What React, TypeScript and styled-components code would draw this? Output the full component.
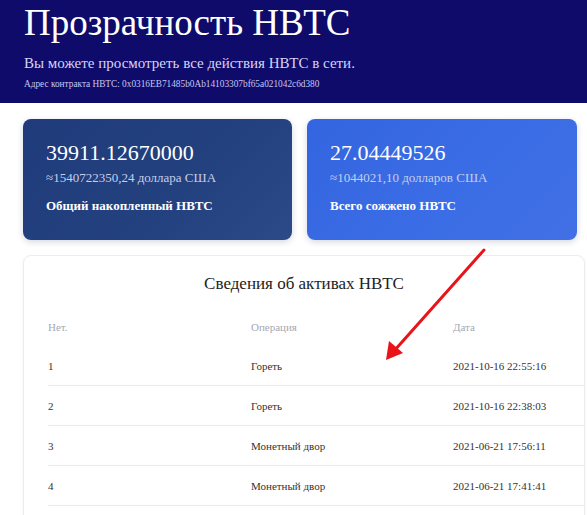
import styled, { createGlobalStyle } from "styled-components";

// ----------------------------------------------
//  global
// ----------------------------------------------
const GlobalStyle = createGlobalStyle`
  html, body {
    margin: 0;
    padding: 0;
    background: #ffffff;
  }
  body {
    font-family: "Liberation Serif", "Times New Roman", serif;
    overflow: hidden;
  }
`;

// ----------------------------------------------
//  styled components
// ----------------------------------------------
const Page = styled.div`
  position: relative;
  width: 587px;
  min-height: 515px;
`;

const Header = styled.header`
  background: #0f0b6a;
  padding: 1px 24px 12px;
  color: #ffffff;
`;

const Title = styled.h1`
  margin: 0;
  font-size: 37px;
  line-height: 44px;
  font-weight: 400;
`;

const Subtitle = styled.p`
  margin: 8px 0 0;
  font-size: 15px;
  line-height: 20px;
  color: #d6d4f4;
`;

const Address = styled.p`
  margin: 4px 0 0;
  font-size: 9.3px;
  line-height: 14px;
  color: #c9c7ee;
`;

const Cards = styled.section`
  display: grid;
  grid-template-columns: 269px 270px;
  gap: 15px;
  padding: 16px 0 0 23px;
`;

const Card = styled.div<{ $tone: "dark" | "light" }>`
  height: 121px;
  box-sizing: border-box;
  padding: 19px 22px 0 23px;
  border-radius: 8px;
  color: #ffffff;
  background: ${(p) =>
    p.$tone === "dark"
      ? "linear-gradient(135deg, #1f3b7b 0%, #24417f 60%, #2c4a88 100%)"
      : "linear-gradient(135deg, #3465e0 0%, #3b6de6 60%, #426fe4 100%)"};
  box-shadow: 0 2px 6px rgba(20, 40, 90, 0.18);
`;

const Value = styled.div`
  font-size: 22px;
  line-height: 30px;
`;

const Approx = styled.div`
  margin-top: 1px;
  font-size: 13px;
  line-height: 18px;
  color: #c5cfe9;
`;

const Label = styled.div`
  margin-top: 10px;
  font-size: 13px;
  line-height: 18px;
  font-weight: 700;
`;

const Panel = styled.section`
  margin: 15px 0 0 23px;
  width: 562px;
  box-sizing: border-box;
  padding: 14px 0 0 24px;
  border: 1px solid #ececec;
  border-radius: 8px;
  box-shadow: 0 1px 4px rgba(0, 0, 0, 0.04);
  overflow: hidden;
  min-height: 270px;
`;

const PanelTitle = styled.h2`
  margin: 0 0 10px;
  padding-right: 24px;
  text-align: center;
  font-size: 17px;
  line-height: 28px;
  font-weight: 400;
  color: #222222;
`;

const Table = styled.table`
  width: 100%;
  border-collapse: collapse;
  font-size: 11px;
`;

const Th = styled.th`
  height: 38px;
  padding: 0;
  text-align: left;
  font-weight: 400;
  color: #a3a8b4;
`;

const Td = styled.td`
  height: 39px;
  padding: 0;
  color: #333333;
  border-bottom: 1px solid #ececec;
`;

const Arrow = styled.svg`
  position: absolute;
  left: 0;
  top: 0;
  pointer-events: none;
`;

// ----------------------------------------------
//  data
// ----------------------------------------------
const rows = [
  { id: 1, op: "Гореть", date: "2021-10-16 22:55:16" },
  { id: 2, op: "Гореть", date: "2021-10-16 22:38:03" },
  { id: 3, op: "Монетный двор", date: "2021-06-21 17:56:11" },
  { id: 4, op: "Монетный двор", date: "2021-06-21 17:41:41" },
];

// ----------------------------------------------
//  function App()
// ----------------------------------------------
export default function App() {
  return (
    <Page>
      <GlobalStyle />
      <Header>
        <Title>Прозрачность НВТС</Title>
        <Subtitle>Вы можете просмотреть все действия НВТС в сети.</Subtitle>
        <Address>
          Адрес контракта НВТС: 0x0316EB71485b0Ab14103307bf65a021042c6d380
        </Address>
      </Header>

      <Cards>
        <Card $tone="dark">
          <Value>39911.12670000</Value>
          <Approx>≈1540722350,24 доллара США</Approx>
          <Label>Общий накопленный НВТС</Label>
        </Card>
        <Card $tone="light">
          <Value>27.04449526</Value>
          <Approx>≈1044021,10 долларов США</Approx>
          <Label>Всего сожжено НВТС</Label>
        </Card>
      </Cards>

      <Panel>
        <PanelTitle>Сведения об активах НВТС</PanelTitle>
        <Table>
          <colgroup>
            <col style={{ width: 203 }} />
            <col style={{ width: 202 }} />
            <col />
          </colgroup>
          <thead>
            <tr>
              <Th>Нет.</Th>
              <Th>Операция</Th>
              <Th>Дата</Th>
            </tr>
          </thead>
          <tbody>
            {rows.map((r) => (
              <tr key={r.id}>
                <Td>{r.id}</Td>
                <Td>{r.op}</Td>
                <Td>{r.date}</Td>
              </tr>
            ))}
          </tbody>
        </Table>
      </Panel>

      {/* red pointer arrow */}
      <Arrow width="587" height="515" viewBox="0 0 587 515">
        <line
          x1="484"
          y1="250"
          x2="394"
          y2="351"
          stroke="#e8141a"
          strokeWidth="3"
          strokeLinecap="round"
        />
        <polygon points="386,360 389,341 403,353" fill="#e8141a" />
      </Arrow>
    </Page>
  );
}
